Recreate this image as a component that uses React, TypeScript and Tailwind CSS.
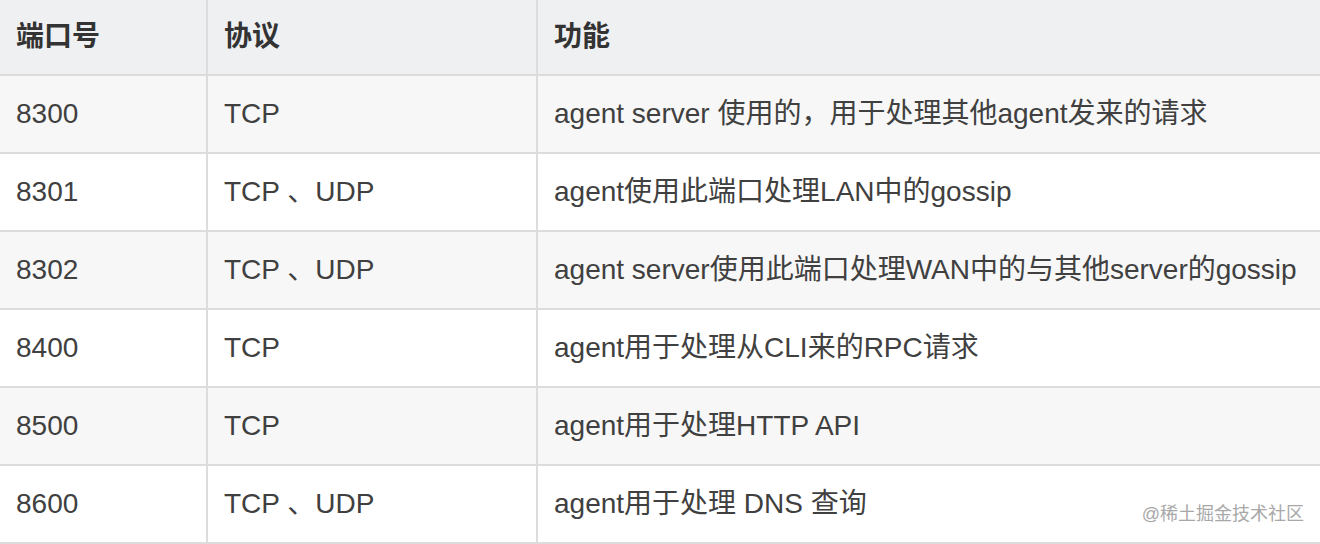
const rows = [
  { port: "8300", proto: "TCP", desc: "agent server 使用的，用于处理其他agent发来的请求" },
  { port: "8301", proto: "TCP 、UDP", desc: "agent使用此端口处理LAN中的gossip" },
  { port: "8302", proto: "TCP 、UDP", desc: "agent server使用此端口处理WAN中的与其他server的gossip" },
  { port: "8400", proto: "TCP", desc: "agent用于处理从CLI来的RPC请求" },
  { port: "8500", proto: "TCP", desc: "agent用于处理HTTP API" },
  { port: "8600", proto: "TCP 、UDP", desc: "agent用于处理 DNS 查询" },
];

export default function App() {
  return (
    <div
      className="relative h-[544px] w-[1320px] overflow-hidden bg-white text-[28px] text-[#404040]"
      style={{ fontFamily: '"Liberation Sans", "Noto Sans CJK SC", sans-serif' }}
    >
      <div className="grid grid-cols-[206px_330px_1fr] h-[76px] border-b-2 border-[#dcdcdc] bg-[#eff0f2] font-bold text-[#333]">
        <div className="flex items-center px-4">端口号</div>
        <div className="flex items-center border-l-2 border-[#dcdcdc] px-4">协议</div>
        <div className="flex items-center border-l-2 border-[#dcdcdc] px-4">功能</div>
      </div>
      {rows.map((r, i) => (
        <div
          key={r.port}
          className={`grid grid-cols-[206px_330px_1fr] h-[78px] border-b-2 border-[#dcdcdc] ${
            i % 2 === 0 ? "bg-[#f7f7f7]" : "bg-white"
          }`}
        >
          <div className="flex items-center px-4">{r.port}</div>
          <div className="flex items-center border-l-2 border-[#dcdcdc] px-4 whitespace-nowrap">{r.proto}</div>
          <div className="flex items-center border-l-2 border-[#dcdcdc] px-4 whitespace-nowrap">{r.desc}</div>
        </div>
      ))}
      <div className="absolute right-[16px] bottom-[16px] text-[18px] text-[#a8a8a8]">@稀土掘金技术社区</div>
    </div>
  );
}
